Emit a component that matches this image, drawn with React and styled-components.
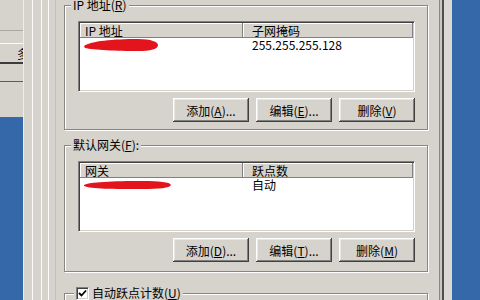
import React from "react";
import styled, { createGlobalStyle } from "styled-components";

const GlobalStyle = createGlobalStyle`
  html, body {
    margin: 0;
    padding: 0;
    background: #d6d3cc;
  }
  body {
    font-family: "Noto Sans CJK SC", "Liberation Sans", sans-serif;
    font-size: 12px;
    color: #000;
  }
`;

const Screen = styled.div`
  display: flex;
  width: 480px;
  height: 300px;
  overflow: hidden;
  background: #d6d3cc;
`;

// the window behind, on the far left
const BackWindow = styled.div`
  width: 23px;
  flex: none;
  display: flex;
  flex-direction: column;
  overflow: hidden;
`;

const BackStrip = styled.div`
  height: ${(p) => p.$h}px;
  flex: none;
  box-sizing: border-box;
  border-bottom: ${(p) => p.$line || "none"};
  overflow: hidden;
  white-space: nowrap;
  line-height: ${(p) => p.$h}px;
  padding-left: 17px;
`;

const BackDesktop = styled.div`
  flex: 1;
  background: #3568a8;
`;

const LeftFrame = styled.div`
  width: 33px;
  flex: none;
  background: linear-gradient(
    to right,
    #e8eef3 0 1px,
    #d6d3cc 1px 9px,
    #fbfbfa 9px 10px,
    #d6d3cc 10px 18px,
    #fbfbfa 18px 19px,
    #d6d3cc 19px 25px,
    #fbfbfa 25px 26px,
    #d6d3cc 26px 32px,
    #c3c0b9 32px 33px
  );
`;

const Sheet = styled.div`
  width: 382px;
  flex: none;
  box-sizing: border-box;
  display: flex;
  flex-direction: column;
  padding: 0 10px 0 8px;
`;

const RightFrame = styled.div`
  width: 14px;
  flex: none;
  background: linear-gradient(
    to right,
    #d6d3cc 0 1px,
    #8a8782 1px 2px,
    #c9c6c0 2px 4px,
    #505050 4px 6px,
    #dcd9d3 6px 14px
  );
`;

const Desktop = styled.div`
  flex: 1;
  background: #3568a8;
`;

const Group = styled.div`
  position: relative;
  flex: none;
  margin-top: ${(p) => p.$mt}px;
  padding: ${(p) => p.$pt}px 12px ${(p) => p.$pb}px 13px;
  border: 1px solid #8a8782;
  box-shadow: inset 1px 1px #fff, 1px 1px #fff;
  min-height: ${(p) => p.$minH || 0}px;
`;

const Legend = styled.div`
  position: absolute;
  top: -7px;
  left: ${(p) => p.$left || 6}px;
  height: 12px;
  padding: 0 2px;
  display: flex;
  align-items: center;
  gap: 3px;
  line-height: 12px;
  background: #d6d3cc;
  white-space: nowrap;
`;

const U = styled.span`
  text-decoration: underline;
  text-underline-offset: 1px;
`;

const ListBox = styled.div`
  box-sizing: border-box;
  height: 71px;
  padding: 1px;
  background: #fff;
  border: 1px solid;
  border-color: #808080 #fff #fff #808080;
  box-shadow: inset 1px 1px #404040, inset -1px -1px #d4d0c8;
`;

const HeaderRow = styled.div`
  display: grid;
  grid-template-columns: 163px 1fr;
  height: 15px;
`;

const HeaderCell = styled.div`
  background: #d6d3cc;
  box-shadow: inset -1px -1px #808080, inset 1px 1px #fff;
  padding-left: ${(p) => p.$pad}px;
  line-height: 15px;
  white-space: nowrap;
`;

const Row = styled.div`
  display: grid;
  grid-template-columns: 163px 1fr;
  height: 14px;
`;

const Cell = styled.div`
  padding-left: ${(p) => p.$pad}px;
  line-height: 14px;
  display: flex;
  align-items: center;
  white-space: nowrap;
`;

const Buttons = styled.div`
  display: flex;
  justify-content: flex-end;
  gap: 7px;
  margin-top: 6px;
`;

const Button = styled.button`
  width: 76px;
  height: 24px;
  padding: 0;
  border: none;
  background: #d6d3cc;
  font: inherit;
  color: #000;
  box-shadow: inset -1px -1px #404040, inset 1px 1px #fff,
    inset -2px -2px #808080, inset 2px 2px #e9e7e2;
`;

const CheckBox = styled.span`
  box-sizing: border-box;
  width: 13px;
  height: 13px;
  display: inline-flex;
  align-items: center;
  justify-content: center;
  background: #fff;
  border: 1px solid;
  border-color: #808080 #fff #fff #808080;
  box-shadow: inset 1px 1px #404040, inset -1px -1px #d4d0c8;
`;

const Scribble = ({ w, h, d }) => (
  <svg width={w} height={h} viewBox={`0 0 ${w} ${h}`}>
    <path d={d} fill="#e3141b" />
  </svg>
);

const AddressList = ({ head1, head2, value, scribble }) => (
  <ListBox>
    <HeaderRow>
      <HeaderCell $pad={5}>{head1}</HeaderCell>
      <HeaderCell $pad={9}>{head2}</HeaderCell>
    </HeaderRow>
    <Row>
      <Cell $pad={3}>{scribble}</Cell>
      <Cell $pad={9}>{value}</Cell>
    </Row>
  </ListBox>
);

export default function App() {
  return (
    <>
      <GlobalStyle />
      <Screen>
        <BackWindow>
          <BackStrip $h={31} $line="1px solid #aaa7a1" />
          <BackStrip $h={13} $line="1px solid #fbfbfa" />
          <BackStrip $h={20} $line="2px solid #3c3c3c">多</BackStrip>
          <BackStrip $h={18} $line="1px solid #5c5c5c" />
          <BackStrip $h={35} />
          <BackDesktop />
        </BackWindow>
        <LeftFrame />
        <Sheet>
          <Group $mt={5} $pt={15} $pb={7}>
            <Legend>
              <span>
                IP 地址(<U>R</U>)
              </span>
            </Legend>
            <AddressList
              head1="IP 地址"
              head2="子网掩码"
              value="255.255.255.128"
              scribble={
                <Scribble
                  w={76}
                  h={14}
                  d="M1 8 C8 3 30 1 55 1 C68 1 75 4 75 7 C75 11 68 13 54 13 C34 13 10 12 2 10 Z"
                />
              }
            />
            <Buttons>
              <Button>
                添加(<U>A</U>)...
              </Button>
              <Button>
                编辑(<U>E</U>)...
              </Button>
              <Button>
                删除(<U>V</U>)
              </Button>
            </Buttons>
          </Group>

          <Group $mt={15} $pt={15} $pb={9}>
            <Legend>
              <span>
                默认网关(<U>F</U>):
              </span>
            </Legend>
            <AddressList
              head1="网关"
              head2="跃点数"
              value="自动"
              scribble={
                <Scribble
                  w={89}
                  h={10}
                  d="M1 5 C6 2 30 1 60 1 C76 1 87 2 88 5 C87 8 76 9 60 9 C30 9 8 9 1 6 Z"
                />
              }
            />
            <Buttons>
              <Button>
                添加(<U>D</U>)...
              </Button>
              <Button>
                编辑(<U>T</U>)...
              </Button>
              <Button>
                删除(<U>M</U>)
              </Button>
            </Buttons>
          </Group>

          <Group $mt={21} $pt={15} $pb={9} $minH={40}>
            <Legend $left={9}>
              <CheckBox>
                <svg width="9" height="9" viewBox="0 0 9 9">
                  <path
                    d="M1 4 L3.5 6.5 L8 1.5"
                    fill="none"
                    stroke="#000"
                    strokeWidth="1.8"
                  />
                </svg>
              </CheckBox>
              <span>
                自动跃点计数(<U>U</U>)
              </span>
            </Legend>
          </Group>
        </Sheet>
        <RightFrame />
        <Desktop />
      </Screen>
    </>
  );
}
